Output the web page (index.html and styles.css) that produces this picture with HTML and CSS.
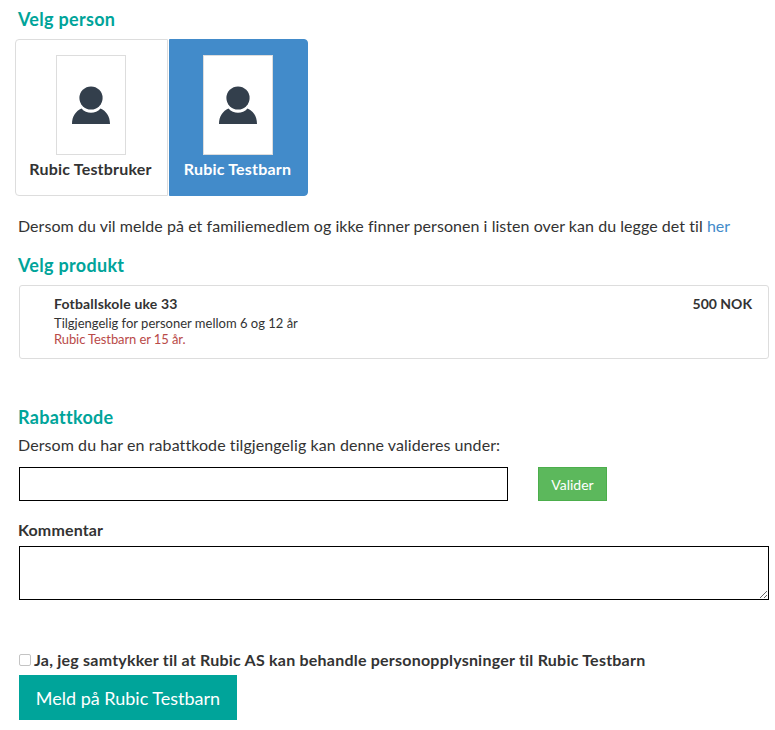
FILE: index.html
```html
<!DOCTYPE html>
<html lang="no">
<head>
<meta charset="utf-8">
<title>Påmelding</title>
<link rel="stylesheet" href="styles.css">
</head>
<body>
<main class="page">
  <h2 class="heading heading-first">Velg person</h2>
  <div class="people">
    <div class="person">
      <div class="photo">
        <svg class="avatar" viewBox="0 0 38 38" aria-hidden="true"><circle cx="19" cy="12" r="11.6"/><path d="M0 38C0 30 4 25 9.500 22.500C12 25.500 15.500 26.800 19 26.800C22.500 26.800 26 25.500 28.500 22.500C34 25 38 30 38 38Z"/></svg>
      </div>
      <div class="person-name">Rubic Testbruker</div>
    </div>
    <div class="person person-active">
      <div class="photo">
        <svg class="avatar" viewBox="0 0 38 38" aria-hidden="true"><circle cx="19" cy="12" r="11.6"/><path d="M0 38C0 30 4 25 9.500 22.500C12 25.500 15.500 26.800 19 26.800C22.500 26.800 26 25.500 28.500 22.500C34 25 38 30 38 38Z"/></svg>
      </div>
      <div class="person-name">Rubic Testbarn</div>
    </div>
  </div>
  <p class="text info">Dersom du vil melde på et familiemedlem og ikke finner personen i listen over kan du legge det til <a href="#">her</a></p>
  <h2 class="heading heading-product">Velg produkt</h2>
  <div class="product">
    <div class="product-body">
      <div class="product-title">Fotballskole uke 33</div>
      <div class="product-line">Tilgjengelig for personer mellom 6 og 12 år</div>
      <div class="product-line product-warning">Rubic Testbarn er 15 år.</div>
    </div>
    <div class="product-price">500 NOK</div>
  </div>
  <h2 class="heading heading-code">Rabattkode</h2>
  <p class="text code-info">Dersom du har en rabattkode tilgjengelig kan denne valideres under:</p>
  <div class="code-row">
    <input class="code-input" type="text" aria-label="Rabattkode">
    <button class="validate" type="button">Valider</button>
  </div>
  <label class="comment-label" for="comment">Kommentar</label>
  <textarea class="comment" id="comment"></textarea>
  <label class="consent">
    <input class="consent-box" type="checkbox">
    <span>Ja, jeg samtykker til at Rubic AS kan behandle personopplysninger til Rubic Testbarn</span>
  </label>
  <button class="submit" type="button">Meld på Rubic Testbarn</button>
</main>
</body>
</html>
```
FILE: styles.css
```css
* { box-sizing: border-box; }
html, body { margin: 0; background: #fff; }
body {
  font-family: Lato, "Open Sans", sans-serif;
  color: #333;
  font-size: 16px;
  overflow: hidden;
}
.page {
  width: 775px;
  height: 730px;
  padding: 0 6px 0 19px;
}
.heading {
  margin: 0 0 0 -1px;
  color: #00a49a;
  font-size: 18px;
  font-weight: 700;
  line-height: 20px;
  letter-spacing: 0.3px;
}
.heading-first { padding-top: 9px; height: 39px; }
.people { display: flex; margin-left: -4px; height: 157px; }
.person {
  width: 153px;
  height: 157px;
  border: 1px solid #ddd;
  border-radius: 4px 0 0 4px;
  display: flex;
  flex-direction: column;
  align-items: center;
  padding: 15px 2px 0 0;
  background: #fff;
}
.person-active {
  width: 139px;
  margin-left: 1px;
  background: #428bca;
  border-color: #428bca;
  border-radius: 0 4px 4px 0;
  color: #fff;
}
.photo {
  width: 70px;
  height: 100px;
  background: #fff;
  border: 1px solid #ddd;
  display: flex;
  align-items: center;
  justify-content: center;
}
.avatar { width: 38px; height: 38px; fill: #333f4c; display: block; }
.person-name {
  margin-top: 4px;
  font-size: 16px;
  font-weight: 700;
  line-height: 20px;
  letter-spacing: 0.2px;
  white-space: nowrap;
}
.text {
  margin: 0 0 0 -1px;
  font-size: 16px;
  line-height: 20px;
  letter-spacing: 0.05px;
  white-space: nowrap;
}
.info { margin-top: 20px; }
.info a { color: #428bca; text-decoration: none; }
.heading-product { margin-top: 19px; }
.product {
  margin-top: 10px;
  height: 74px;
  border: 1px solid #ddd;
  border-radius: 3px;
  display: flex;
  justify-content: space-between;
  padding: 9px 16px 0 34px;
}
.product-title {
  font-size: 14px;
  font-weight: 700;
  line-height: 17px;
  letter-spacing: 0.18px;
  margin-bottom: 4px;
}
.product-line { font-size: 13px; line-height: 15px; }
.product-warning { color: #b94a48; letter-spacing: -0.1px; margin-top: 1px; }
.product-price { font-size: 14px; font-weight: 700; line-height: 18px; }
.heading-code { margin-top: 48px; }
.code-info { margin-top: 8px; letter-spacing: 0.08px; }
.code-row { display: flex; margin-top: 12px; height: 34px; }
.code-input {
  width: 489px;
  height: 34px;
  border: 1px solid #000;
  background: #fff;
  padding: 0;
  margin: 0;
  border-radius: 0;
}
.validate {
  margin-left: 30px;
  width: 69px;
  height: 34px;
  background: #5cb85c;
  border: 1px solid #4cae4c;
  color: #fff;
  font: 14px Lato, sans-serif;
  padding: 0;
}
.comment-label {
  display: block;
  margin: 19px 0 0 -1px;
  font-weight: 700;
  font-size: 16px;
  line-height: 20px;
  letter-spacing: 0.15px;
}
.comment {
  display: block;
  margin: 6px 0 0;
  width: 750px;
  height: 54px;
  border: 1px solid #000;
  padding: 0;
  border-radius: 0;
}
.consent {
  display: flex;
  align-items: center;
  margin-top: 49px;
  height: 20px;
  font-weight: 700;
  font-size: 16px;
  letter-spacing: 0.22px;
  white-space: nowrap;
}
.consent-box {
  appearance: none;
  margin: 1px 3px 0 0;
  width: 12px;
  height: 12px;
  background: #fff;
  border: 1px solid #c4c4c4;
  border-radius: 2px;
}
.submit {
  display: block;
  margin-top: 6px;
  width: 218px;
  height: 45px;
  background: #00a49a;
  border: 0;
  color: #fff;
  font: 18px Lato, sans-serif;
  padding: 0;
}
```
